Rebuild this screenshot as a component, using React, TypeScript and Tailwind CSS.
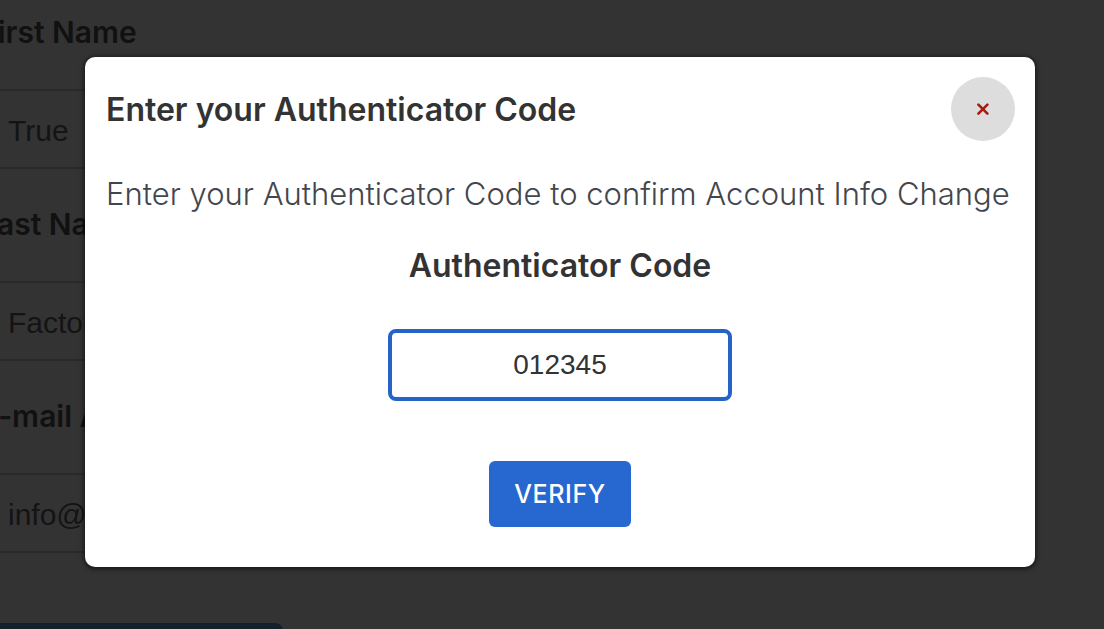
import { useState } from "react";

const fields = [
  { id: "first-name", label: "First Name", value: "True" },
  { id: "last-name", label: "Last Name", value: "Factor" },
  { id: "email", label: "E-mail Address", value: "info@truefactor.io" },
];

function AccountForm() {
  return (
    <form className="-ml-5 flex w-4/5 flex-col gap-[35px] pt-3">
      {fields.map((field) => (
        <div key={field.id} className="flex flex-col gap-[37px]">
          <label htmlFor={field.id} className="text-[30px] leading-10 font-semibold text-[#555555]">
            {field.label}
          </label>
          <input
            id={field.id}
            type="text"
            defaultValue={field.value}
            className="h-20 border-2 border-[#d2d2d2] bg-white pt-1 pl-[26px] font-['Liberation_Sans',Arial,sans-serif] text-[30px] text-[#666666] outline-none"
          />
        </div>
      ))}
      <button type="button" className="mt-[35px] h-20 w-[303px] rounded-lg bg-[#64a0d7] text-[26px] font-medium text-white">
        UPDATE
      </button>
    </form>
  );
}

function CodeDialog() {
  const [code, setCode] = useState("012345");
  return (
    <section
      role="dialog"
      aria-modal="true"
      aria-labelledby="dialog-title"
      className="flex w-full flex-col items-center rounded-[10px] bg-white px-5 pt-5 pb-10 shadow-[0_1px_5px_1px_rgba(0,0,0,0.6)]"
    >
      <header className="flex w-full items-center justify-between pl-px">
        <h2 id="dialog-title" className="pt-0.5 text-[32px] leading-10 font-semibold text-[#333333]">
          Enter your Authenticator Code
        </h2>
        <button
          type="button"
          aria-label="Close"
          className="flex size-16 items-center justify-center rounded-full bg-[#dddddd] text-[#a61c12]"
        >
          <svg viewBox="0 0 12 12" className="size-3" fill="none" stroke="currentColor" strokeWidth="2.6" strokeLinecap="round">
            <path d="M1.4 1.6 10.4 10.6M10.4 1.6 1.4 10.6" />
          </svg>
        </button>
      </header>
      <p className="mt-[33px] w-full pl-px text-[31px] leading-10 font-[350] whitespace-nowrap text-[#44464d]">
        Enter your Authenticator Code to confirm Account Info Change
      </p>
      <label htmlFor="code" className="mt-8 text-[32px] leading-10 font-semibold text-[#333333]">
        Authenticator Code
      </label>
      <input
        id="code"
        type="text"
        inputMode="numeric"
        value={code}
        onChange={(event) => setCode(event.target.value)}
        className="mt-[43px] h-[72px] w-[344px] rounded-lg border-4 border-[#2563c9] bg-white text-center font-['Liberation_Sans',Arial,sans-serif] text-[28px] text-[#333333] outline-none"
      />
      <button
        type="button"
        className="mt-[60px] h-[66px] rounded-md bg-[#2767d0] px-[25px] text-[25px] leading-8 font-medium tracking-wide text-white"
      >
        VERIFY
      </button>
    </section>
  );
}

export default function App() {
  return (
    <div className="relative h-screen overflow-hidden bg-white font-['Inter',sans-serif]">
      <AccountForm />
      <div className="absolute inset-0 flex items-start bg-black/80 pt-[57px] pr-[69px] pl-[85px]">
        <CodeDialog />
      </div>
    </div>
  );
}
